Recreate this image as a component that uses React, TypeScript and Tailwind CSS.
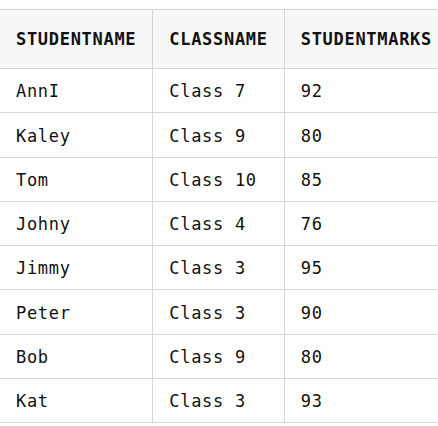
const rows = [
  { name: "AnnI", cls: "Class 7", marks: 92 },
  { name: "Kaley", cls: "Class 9", marks: 80 },
  { name: "Tom", cls: "Class 10", marks: 85 },
  { name: "Johny", cls: "Class 4", marks: 76 },
  { name: "Jimmy", cls: "Class 3", marks: 95 },
  { name: "Peter", cls: "Class 3", marks: 90 },
  { name: "Bob", cls: "Class 9", marks: 80 },
  { name: "Kat", cls: "Class 3", marks: 93 },
];

export default function App() {
  return (
    <div className="w-[438px] h-[426px] overflow-hidden bg-white pt-[9px] font-['DejaVu_Sans_Mono',monospace] text-[17px] tracking-[0.7px] text-[#111]">
      <table className="border-collapse text-left whitespace-nowrap">
        <thead>
          <tr className="h-[59px] bg-[#f8f8f8] border-y border-[#d6d6d6]">
            <th className="px-4 pt-[2px] font-bold">STUDENTNAME</th>
            <th className="px-4 pt-[2px] font-bold border-l border-[#d6d6d6]">CLASSNAME</th>
            <th className="px-4 pt-[2px] font-bold border-l border-[#d6d6d6]">STUDENTMARKS</th>
          </tr>
        </thead>
        <tbody>
          {rows.map((r) => (
            <tr key={r.name} className="h-[44.25px] border-b border-[#d6d6d6]">
              <td className="px-4 pt-[3px]">{r.name}</td>
              <td className="px-4 pt-[3px] border-l border-[#d6d6d6]">{r.cls}</td>
              <td className="px-4 pt-[3px] border-l border-[#d6d6d6]">{r.marks}</td>
            </tr>
          ))}
        </tbody>
      </table>
    </div>
  );
}
